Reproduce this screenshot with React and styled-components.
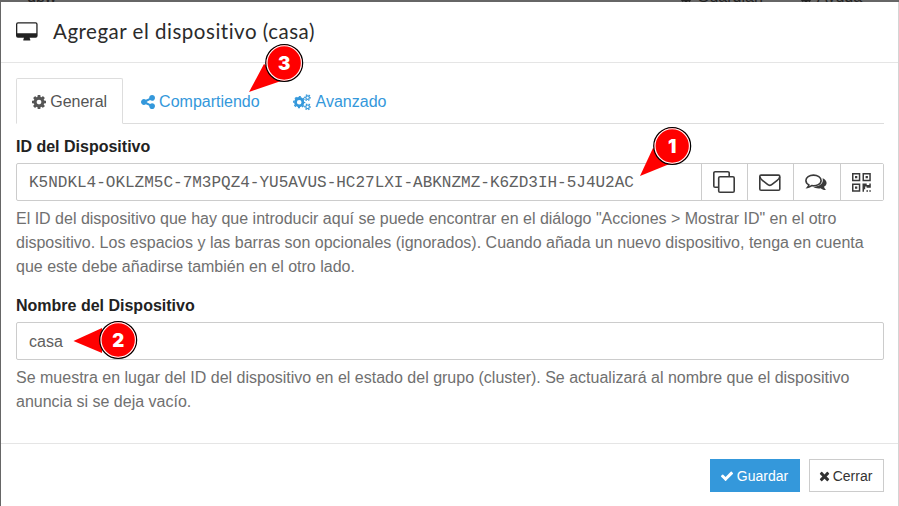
import React from "react";
import styled, { createGlobalStyle, css } from "styled-components";

const GlobalStyle = createGlobalStyle`
  *, *::before, *::after { box-sizing: border-box; }
  html, body { margin: 0; height: 100%; overflow: hidden; background: #666; }
  body { font: 16px/24px "Liberation Sans", Arial, sans-serif; color: #707070; }
`;

const Page = styled.div`
  position: relative;
  height: 506px;
  padding: 2px 0 0 1px;
  overflow: hidden;
  background: #666;
`;
const Behind = styled.span`
  position: absolute;
  top: -11px;
  left: ${(p) => p.$left}px;
  font-size: 16px;
  line-height: 16px;
  color: #222;
  display: flex;
  align-items: center;
  gap: 4px;
`;
const Dialog = styled.section`
  position: relative;
  height: 504px;
  background: #fff;
  border-right: 1px solid #d4d4d4;
`;
const Header = styled.header`
  display: flex;
  align-items: center;
  height: 61px;
  padding: 0 15px;
  border-bottom: 1px solid #e5e5e5;
  color: #222;
`;
const Title = styled.h4`
  margin: -2px 0 0 14px;
  font: 400 20.5px/24px Lato, sans-serif;
  letter-spacing: 0.51px;
  color: #2b2b2b;
`;
const Body = styled.main`
  height: 380px;
  padding: 15px 14px 0 15px;
`;
const Tabs = styled.nav`
  display: flex;
  height: 46px;
  border-bottom: 1px solid #ddd;
`;
const Tab = styled.a`
  display: flex;
  align-items: center;
  gap: 4.4px;
  height: 46px;
  padding: 2px 14.8px 0;
  margin-right: 2px;
  border: 1px solid transparent;
  color: #3498db;
  ${(p) => p.$active && css`
    color: #555;
    background: #fff;
    border-color: #ddd #ddd #fff;
    border-radius: 2px 2px 0 0;
  `}
`;
const Label = styled.label`
  display: block;
  margin-top: ${(p) => p.$top}px;
  font-weight: 700;
  line-height: 24px;
  color: #222;
`;
const Field = styled.div`
  display: flex;
  height: 38px;
  margin-top: 4px;
  border: 1px solid #ccc;
  border-radius: 2px;
`;
const Value = styled.div`
  flex: 1;
  padding: 0 12px;
  line-height: 37px;
  color: #606060;
  ${(p) => p.$mono && css`
    padding-top: 1px;
    font-family: "Liberation Mono", monospace;
  `}
`;
const Addon = styled.button`
  display: grid;
  place-items: center;
  width: ${(p) => p.$w}px;
  padding: 0 2px 0 0;
  border: 0;
  border-left: 1px solid #ccc;
  background: #fff;
  color: #3a3a3a;
`;
const Help = styled.p`
  margin: 6px 0 0;
  line-height: 24px;
  white-space: pre-line;
`;
const Footer = styled.footer`
  display: flex;
  justify-content: flex-end;
  gap: 9px;
  height: 63px;
  padding: 15px 14px 0 0;
  border-top: 1px solid #e5e5e5;
`;
const Button = styled.button`
  display: flex;
  align-items: center;
  justify-content: center;
  gap: 3px;
  width: ${(p) => p.$w}px;
  height: 33px;
  padding: 0 2px 0 0;
  font: 14px/20px "Liberation Sans", Arial, sans-serif;
  border: 1px solid ${(p) => (p.$primary ? "#3498db" : "#ccc")};
  background: ${(p) => (p.$primary ? "#3498db" : "#fff")};
  color: ${(p) => (p.$primary ? "#fff" : "#333")};
`;
const Pins = styled.svg`
  position: absolute;
  inset: 0;
  pointer-events: none;
`;
const Glyph = styled.svg`
  display: block;
  flex: none;
  fill: currentColor;
`;

const GEAR = "M1152 896q0-106-75-181t-181-75-181 75-75 181 75 181 181 75 181-75 75-181zm512-109v222q0 12-8 23t-20 13l-185 28q-19 54-39 91 35 50 107 138 10 12 10 25t-9 23q-27 37-99 108t-94 71q-12 0-26-9l-138-108q-44 23-91 38-16 136-29 186-7 28-36 28h-222q-14 0-24.5-8.5t-11.5-21.5l-28-184q-49-16-90-37l-141 107q-10 9-25 9-14 0-25-11-126-114-165-168-7-10-7-23 0-12 8-23 15-21 51-66.5t54-70.5q-27-50-41-99l-183-27q-13-2-21-12.5t-8-23.5v-222q0-12 8-23t19-13l186-28q14-46 39-92-40-57-107-138-10-12-10-24 0-10 9-23 26-36 98.5-107.5t94.5-71.5q13 0 26 10l138 107q44-23 91-38 16-136 29-186 7-28 36-28h222q14 0 24.5 8.5t11.5 21.5l28 184q49 16 90 37l142-107q9-9 24-9 13 0 25 10 129 119 165 170 7 8 7 22 0 12-8 23-15 21-51 66.5t-54 70.5q26 50 41 98l183 28q13 2 21 12.5t8 23.5z";
const SHARE = "M1344 1024q133 0 226.5 93.5t93.5 226.5-93.5 226.5-226.5 93.5-226.5-93.5-93.5-226.5q0-12 2-34l-360-180q-92 86-218 86-133 0-226.5-93.5t-93.5-226.5 93.5-226.5 226.5-93.5q126 0 218 86l360-180q-2-22-2-34 0-133 93.5-226.5t226.5-93.5 226.5 93.5 93.5 226.5-93.5 226.5-226.5 93.5q-126 0-218-86l-360 180q2 22 2 34t-2 34l360 180q92-86 218-86z";
const CHECK = "M1671 566q0 40-28 68l-724 724-136 136q-28 28-68 28t-68-28l-136-136-362-362q-28-28-28-68t28-68l136-136q28-28 68-28t68 28l294 295 656-657q28-28 68-28t68 28l136 136q28 28 28 68z";
const TIMES = "M1490 1322q0 40-28 68l-136 136q-28 28-68 28t-68-28l-294-294-294 294q-28 28-68 28t-68-28l-136-136q-28-28-28-68t28-68l294-294-294-294q-28-28-28-68t28-68l136-136q28-28 68-28t68 28l294 294 294-294q28-28 68-28t68 28l136 136q28 28 28 68t-28 68l-294 294 294 294q28 28 28 68z";

const Icon = ({ d, w, h = w, box }) => <Glyph width={w} height={h} viewBox={box}><path d={d} /></Glyph>;

/* A cog made of a ring and a dashed ring of teeth. */
const Cog = ({ x, y, r, hole, teeth }) => {
  const mid = r - 0.5;
  const step = (2 * Math.PI * mid) / teeth;
  const body = r - 0.9;
  return (
    <g fill="none" stroke="currentColor">
      <circle cx={x} cy={y} r={(body + hole) / 2} strokeWidth={body - hole} />
      <circle cx={x} cy={y} r={mid} strokeWidth="1.3" strokeDasharray={`${step * 0.5} ${step * 0.5}`} strokeDashoffset={step * 0.25} />
    </g>
  );
};
const Cogs = () => (
  <Glyph width="18" height="17" viewBox="0 0 18 17">
    <Cog x={6.2} y={8.2} r={6} hole={2.3} teeth={8} />
    <Cog x={14.6} y={3.6} r={3.3} hole={1.2} teeth={6} />
    <Cog x={14.6} y={12.8} r={3.3} hole={1.2} teeth={6} />
  </Glyph>
);
const Desktop = () => (
  <Glyph width="23" height="20" viewBox="0 0 23 20">
    <path fillRule="evenodd" d="M2 .3h17.6a2 2 0 0 1 2 2v11.4a2 2 0 0 1-2 2h-6l.7 2v.8H7.3v-.8l.7-2H2a2 2 0 0 1-2-2V2.3a2 2 0 0 1 2-2ZM2 1.5q-.7 0-.7.7v9.1h19V2.2q0-.7-.7-.7Z" />
  </Glyph>
);
const Clone = () => (
  <Glyph width="22" height="22" viewBox="0 0 22 22">
    <g fill="none" stroke="currentColor" strokeWidth="1.6">
      <rect x="5.7" y="5.7" width="15.5" height="15.5" rx="1.3" />
      <path d="M5.7 16.2H2.1A1.3 1.3 0 0 1 .8 14.9V2.1A1.3 1.3 0 0 1 2.1.8h12.8a1.3 1.3 0 0 1 1.3 1.3v3.6" />
    </g>
  </Glyph>
);
const Envelope = () => (
  <Glyph width="22" height="18" viewBox="0 0 22 18">
    <g fill="none" stroke="currentColor" strokeWidth="1.6">
      <rect x=".8" y="2.1" width="20" height="15.1" rx="1.3" />
      <path d="M1 3.9q.5 2 2.4 3.5l4.8 3.8q2.6 2.3 5.2 0l4.8-3.8q2-1.5 2.5-3.5" />
    </g>
  </Glyph>
);
const Comments = () => (
  <Glyph width="22" height="18" viewBox="0 0 22 18">
    <g transform="translate(0 .8)">
      <path d="M8.5 1.3C4.4 1.3.9 3.7.9 6.7c0 1.8 1.2 3.4 3 4.4-.2 1-.8 1.8-1.4 2.5 1.6-.2 3-.9 4.2-1.8 5.1.7 9.4-1.6 9.4-5.1 0-3-3.5-5.4-7.6-5.4Z" fill="none" stroke="currentColor" strokeWidth="1.6" />
      <path d="M17.6 4.5c2.4 1 4 2.6 4 4.6 0 1.5-1 2.9-2.6 3.9.2 1 .9 1.8 1.6 2.6.3.3.1.7-.3.7-1.9-.2-3.3-.9-4.6-1.9-3 .5-5.8-.1-7.7-1.4 5.6 0 9.8-2.6 9.8-6.5q0-1-.2-2Z" />
    </g>
  </Glyph>
);
const Qr = () => (
  <Glyph width="19" height="19" viewBox="0 0 19 19">
    <path fillRule="evenodd" d="M0 0h8.3v8.3H0ZM1.5 1.5v5.3h5.3V1.5ZM10.5 0h8.3v8.3h-8.3ZM12 1.5v5.3h5.3V1.5ZM0 10.5h8.3v8.3H0ZM1.5 12v5.3h5.3V12Z" />
    <path d="M3 3h2.3v2.3H3ZM13.6 3h2.3v2.3h-2.3ZM3 13.5h2.3v2.3H3ZM10.5 10.5h4.2v1.4h2.6v-1.4h1.5v4.3h-4.2v-1.4h-1.4v2.8H12v2.6h-1.5ZM14.4 17.2H16v1.6h-1.6ZM17.3 17.2h1.5v1.6h-1.5Z" />
  </Glyph>
);

const Pin = ({ x, y, tip, n }) => (
  <g>
    <path d={tip} fill="#f00" />
    <circle cx={x} cy={y} r="18.4" fill="#f00" stroke="#000" strokeWidth="1.3" />
    <circle cx={x} cy={y} r="17.2" fill="#f00" stroke="#fff" strokeWidth="1.1" />
    <text x={x} y={y + 6.8} fill="#fff" textAnchor="middle" fontFamily="Inter, sans-serif" fontWeight="900" fontSize="18.5">{n}</text>
  </g>
);

export default function App() {
  return (
    <Page>
      <GlobalStyle />
      <Behind $left={27}>qbw</Behind>
      <Behind $left={679}><Icon d={GEAR} w={14} box="0 0 1792 1792" />Guardian</Behind>
      <Behind $left={799}><Icon d={GEAR} w={14} box="0 0 1792 1792" />Ayuda</Behind>
      <Dialog>
        <Header><Desktop /><Title>Agregar el dispositivo (casa)</Title></Header>
        <Body>
          <Tabs>
            <Tab $active><Icon d={GEAR} w={14} box="128 128 1536 1536" />General</Tab>
            <Tab><Icon d={SHARE} w={14} box="128 128 1536 1536" />Compartiendo</Tab>
            <Tab><Cogs />Avanzado</Tab>
          </Tabs>
          <Label $top={11}>ID del Dispositivo</Label>
          <Field>
            <Value $mono>K5NDKL4-OKLZM5C-7M3PQZ4-YU5AVUS-HC27LXI-ABKNZMZ-K6ZD3IH-5J4U2AC</Value>
            <Addon $w={46}><Clone /></Addon>
            <Addon $w={46}><Envelope /></Addon>
            <Addon $w={47}><Comments /></Addon>
            <Addon $w={43}><Qr /></Addon>
          </Field>
          <Help>{`El ID del dispositivo que hay que introducir aquí se puede encontrar en el diálogo "Acciones > Mostrar ID" en el otro
dispositivo. Los espacios y las barras son opcionales (ignorados). Cuando añada un nuevo dispositivo, tenga en cuenta
que este debe añadirse también en el otro lado.`}</Help>
          <Label $top={15}>Nombre del Dispositivo</Label>
          <Field><Value>casa</Value></Field>
          <Help>{`Se muestra en lugar del ID del dispositivo en el estado del grupo (cluster). Se actualizará al nombre que el dispositivo
anuncia si se deja vacío.`}</Help>
        </Body>
        <Footer>
          <Button $primary $w={90}><Icon d={CHECK} w={14} h={14} box="0 0 1792 1792" />Guardar</Button>
          <Button $w={75}><Icon d={TIMES} w={11} h={14} box="192 0 1408 1792" />Cerrar</Button>
        </Footer>
      </Dialog>
      <Pins width="899" height="506" viewBox="0 0 899 506">
        <Pin n="3" x={284.2} y={63} tip="M249 92L264 64L284 80Z" />
        <Pin n="1" x={672.2} y={146} tip="M640 176L653 148L672 163Z" />
        <Pin n="2" x={118.2} y={340} tip="M73.5 341L102 328V353Z" />
      </Pins>
    </Page>
  );
}
